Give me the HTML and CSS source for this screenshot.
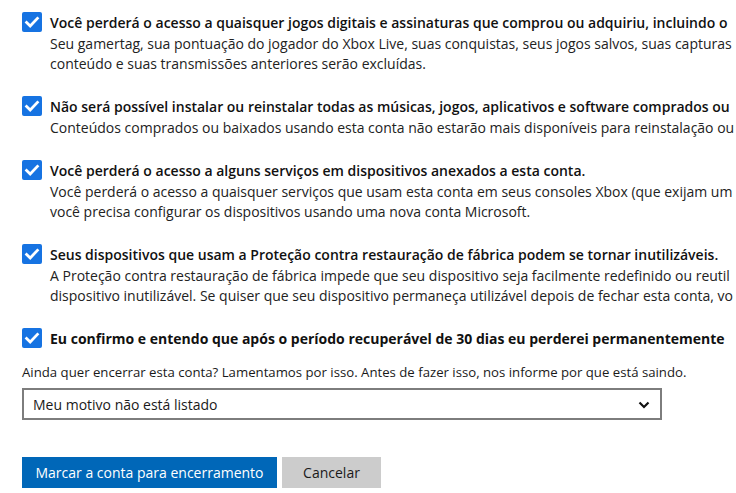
FILE: index.html
```html
<!DOCTYPE html>
<html lang="pt-BR">
<head>
<meta charset="utf-8">
<link rel="stylesheet" href="styles.css">
</head>
<body>
<main class="page">
  <div class="item">
    <span class="check"><svg viewBox="0 0 20 20" width="20" height="20"><path d="M4.6 10.4 L8.2 13.9 L15.4 6.4" fill="none" stroke="#fff" stroke-width="2.8" stroke-linecap="square"/></svg></span>
    <div class="text">
      <div class="title">Você perderá o acesso a quaisquer jogos digitais e assinaturas que comprou ou adquiriu, incluindo o</div>
      <div class="desc">Seu gamertag, sua pontuação do jogador do Xbox Live, suas conquistas, seus jogos salvos, suas capturas</div>
      <div class="desc">conteúdo e suas transmissões anteriores serão excluídas.</div>
    </div>
  </div>
  <div class="item">
    <span class="check"><svg viewBox="0 0 20 20" width="20" height="20"><path d="M4.6 10.4 L8.2 13.9 L15.4 6.4" fill="none" stroke="#fff" stroke-width="2.8" stroke-linecap="square"/></svg></span>
    <div class="text">
      <div class="title">Não será possível instalar ou reinstalar todas as músicas, jogos, aplicativos e software comprados ou</div>
      <div class="desc">Conteúdos comprados ou baixados usando esta conta não estarão mais disponíveis para reinstalação ou</div>
    </div>
  </div>
  <div class="item">
    <span class="check"><svg viewBox="0 0 20 20" width="20" height="20"><path d="M4.6 10.4 L8.2 13.9 L15.4 6.4" fill="none" stroke="#fff" stroke-width="2.8" stroke-linecap="square"/></svg></span>
    <div class="text">
      <div class="title">Você perderá o acesso a alguns serviços em dispositivos anexados a esta conta.</div>
      <div class="desc">Você perderá o acesso a quaisquer serviços que usam esta conta em seus consoles Xbox (que exijam um</div>
      <div class="desc">você precisa configurar os dispositivos usando uma nova conta Microsoft.</div>
    </div>
  </div>
  <div class="item">
    <span class="check"><svg viewBox="0 0 20 20" width="20" height="20"><path d="M4.6 10.4 L8.2 13.9 L15.4 6.4" fill="none" stroke="#fff" stroke-width="2.8" stroke-linecap="square"/></svg></span>
    <div class="text">
      <div class="title">Seus dispositivos que usam a Proteção contra restauração de fábrica podem se tornar inutilizáveis.</div>
      <div class="desc">A Proteção contra restauração de fábrica impede que seu dispositivo seja facilmente redefinido ou reutil</div>
      <div class="desc">dispositivo inutilizável. Se quiser que seu dispositivo permaneça utilizável depois de fechar esta conta, vo</div>
    </div>
  </div>
  <div class="item item-last">
    <span class="check"><svg viewBox="0 0 20 20" width="20" height="20"><path d="M4.6 10.4 L8.2 13.9 L15.4 6.4" fill="none" stroke="#fff" stroke-width="2.8" stroke-linecap="square"/></svg></span>
    <div class="text">
      <div class="title strong">Eu confirmo e entendo que após o período recuperável de 30 dias eu perderei permanentemente</div>
    </div>
  </div>
  <label class="label" for="reason">Ainda quer encerrar esta conta? Lamentamos por isso. Antes de fazer isso, nos informe por que está saindo.</label>
  <div class="select-wrap">
    <select id="reason" class="select">
      <option>Meu motivo não está listado</option>
    </select>
    <svg class="chevron" viewBox="0 0 12 8" width="12" height="8"><path d="M1.5 1.5 L6 6 L10.5 1.5" fill="none" stroke="#111" stroke-width="2.2"/></svg>
  </div>
  <div class="actions">
    <button class="btn btn-primary" type="button">Marcar a conta para encerramento</button>
    <button class="btn btn-secondary" type="button">Cancelar</button>
  </div>
</main>
</body>
</html>
```
FILE: styles.css
```css
html,body{margin:0;padding:0;background:#fff;}
body{overflow:hidden;width:736px;height:493px;font-family:"Open Sans","Noto Sans",sans-serif;color:#1a1a1a;}
.page{padding:12px 0 0 22px;display:flex;flex-direction:column;align-items:flex-start;}
.item{display:flex;gap:8px;margin-bottom:22px;white-space:nowrap;}
.item-last{margin-bottom:12px;}
.check{flex:0 0 20px;width:20px;height:20px;background:#1673e2;border-radius:2px;display:block;}
.check svg{display:block;}
.title{font-size:14px;font-weight:600;line-height:22px;color:#111;}
.title.strong{font-weight:700;}
.desc{font-size:14px;line-height:20px;color:#222;}
.label{font-size:13.2px;line-height:20px;color:#1a1a1a;white-space:nowrap;}
.select-wrap{position:relative;margin-top:6px;width:640px;height:32px;}
.select{appearance:none;-webkit-appearance:none;box-sizing:border-box;width:640px;height:32px;border:2px solid #7d7d7d;border-radius:0;background:#fff;padding:0 30px 0 9px;font-family:"Open Sans","Noto Sans",sans-serif;font-size:14px;color:#1a1a1a;outline:none;}
.chevron{position:absolute;right:12px;top:13px;pointer-events:none;}
.actions{display:flex;gap:5px;margin-top:37px;}
.btn{height:31px;border:0;border-radius:0;font-family:"Open Sans","Noto Sans",sans-serif;font-size:14px;padding:0;cursor:pointer;}
.btn-primary{background:#0067b8;color:#fff;width:255px;}
.btn-secondary{background:#cccccc;color:#1a1a1a;width:99px;}
```
